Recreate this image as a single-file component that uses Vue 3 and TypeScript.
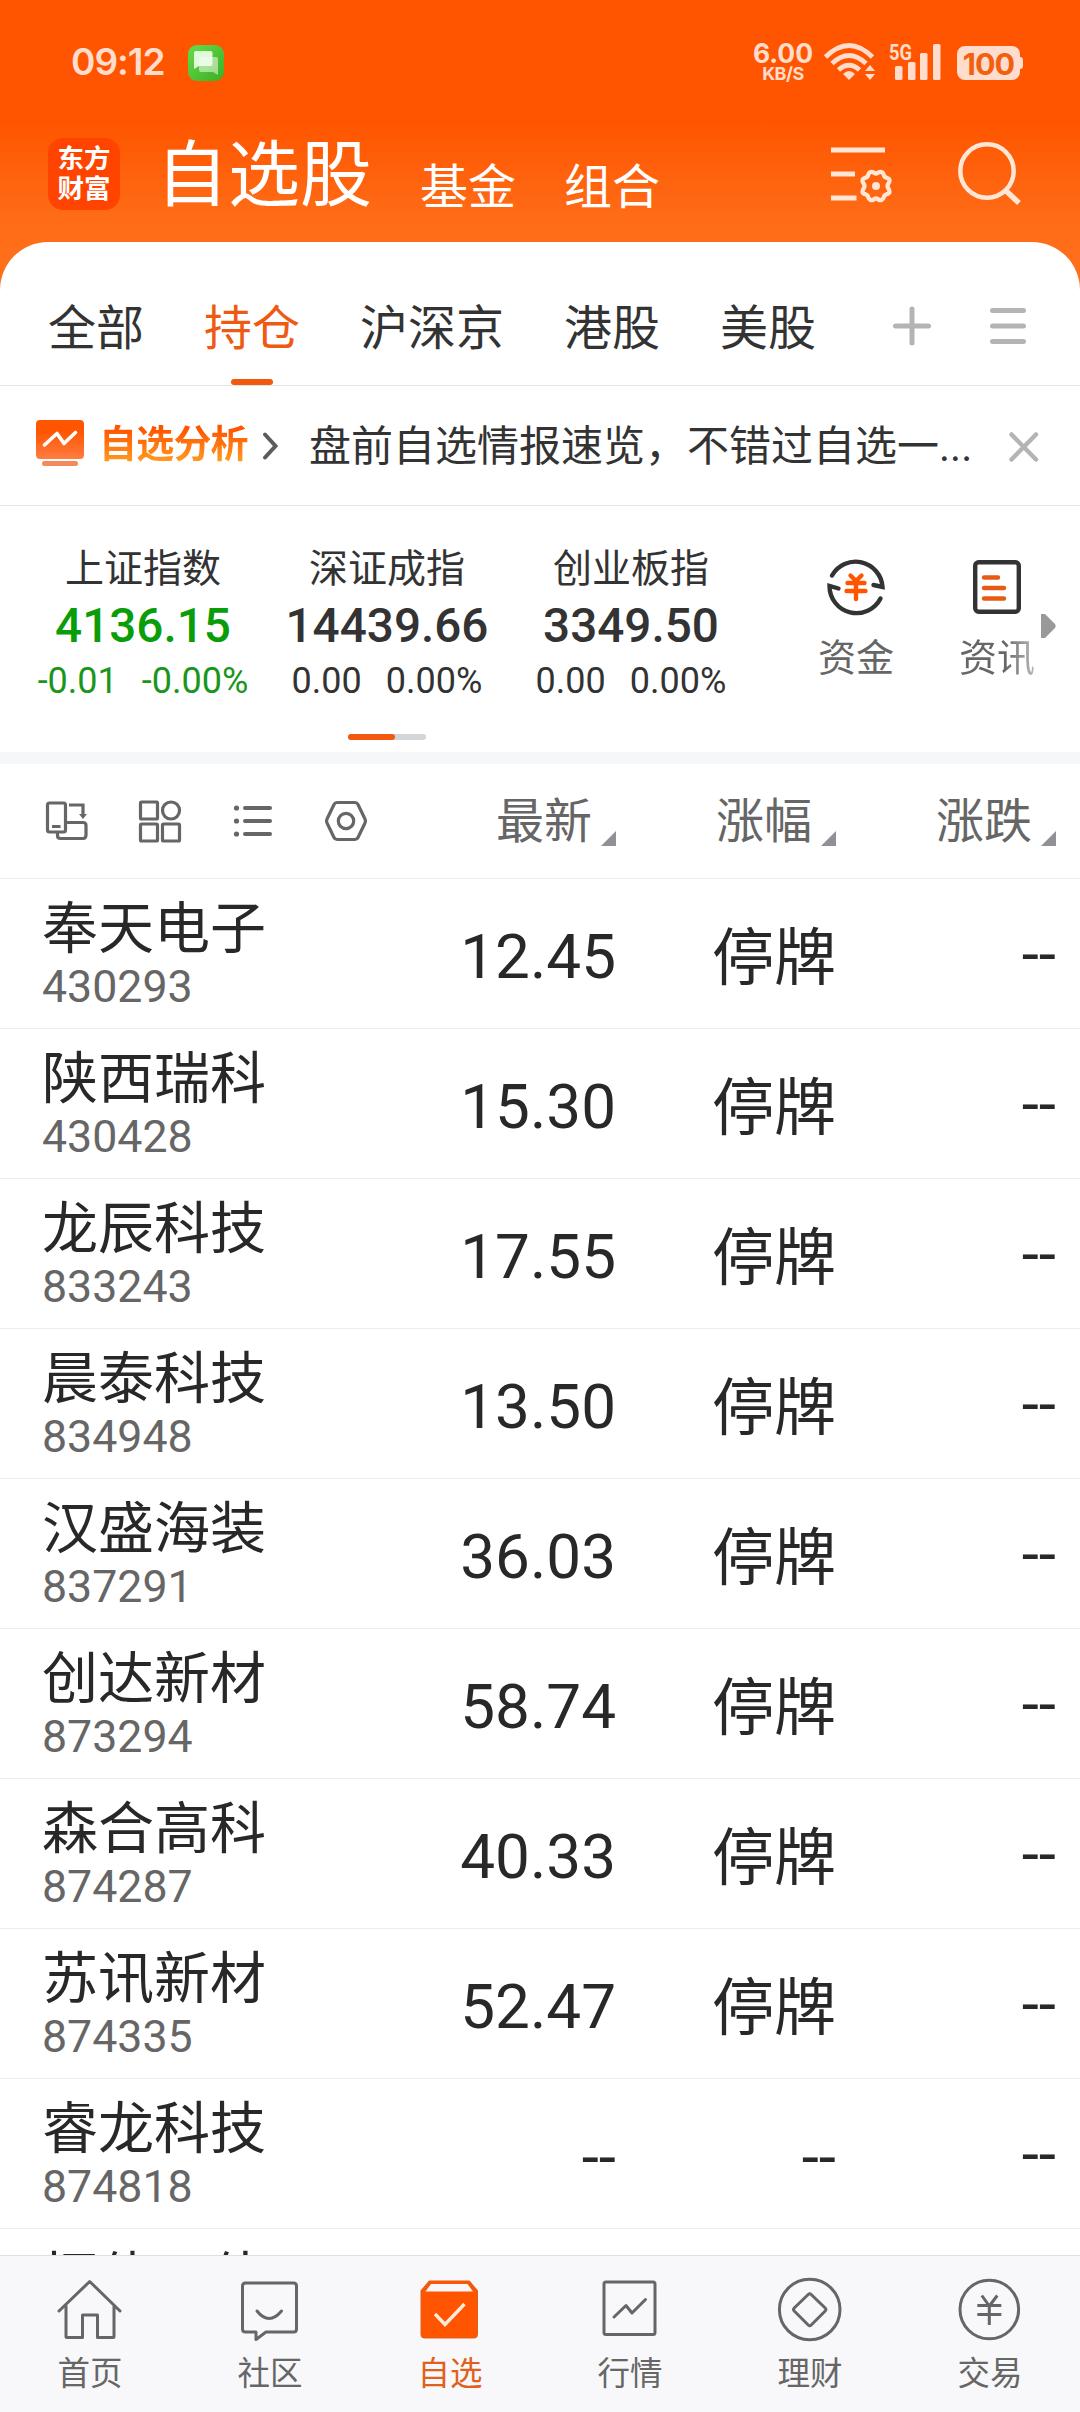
<script setup lang="ts">
interface IndexQuote {
  name: string
  value: string
  change: string
  percent: string
  down?: boolean
}

interface Stock {
  name: string
  code: string
  price: string
  rate: string
  diff: string
}

const tabs: string[] = ['全部', '持仓', '沪深京', '港股', '美股']
const activeTab = '持仓'

const indices: IndexQuote[] = [
  { name: '上证指数', value: '4136.15', change: '-0.01', percent: '-0.00%', down: true },
  { name: '深证成指', value: '14439.66', change: '0.00', percent: '0.00%' },
  { name: '创业板指', value: '3349.50', change: '0.00', percent: '0.00%' },
]

const columns: string[] = ['最新', '涨幅', '涨跌']

const stocks: Stock[] = [
  { name: '奉天电子', code: '430293', price: '12.45', rate: '停牌', diff: '--' },
  { name: '陕西瑞科', code: '430428', price: '15.30', rate: '停牌', diff: '--' },
  { name: '龙辰科技', code: '833243', price: '17.55', rate: '停牌', diff: '--' },
  { name: '晨泰科技', code: '834948', price: '13.50', rate: '停牌', diff: '--' },
  { name: '汉盛海装', code: '837291', price: '36.03', rate: '停牌', diff: '--' },
  { name: '创达新材', code: '873294', price: '58.74', rate: '停牌', diff: '--' },
  { name: '森合高科', code: '874287', price: '40.33', rate: '停牌', diff: '--' },
  { name: '苏讯新材', code: '874335', price: '52.47', rate: '停牌', diff: '--' },
  { name: '睿龙科技', code: '874818', price: '--', rate: '--', diff: '--' },
  { name: '恒伟一佳', code: '', price: '', rate: '', diff: '' },
]

const navItems: string[] = ['首页', '社区', '自选', '行情', '理财', '交易']
const activeNav = '自选'
</script>

<template>
  <div class="app">
    <header class="header">
      <div class="status">
        <span class="time">09:12</span>
        <svg class="msg" width="36" height="36" viewBox="0 0 36 36">
          <defs>
            <linearGradient id="msgBg" x1="0" y1="0" x2="1" y2="1">
              <stop offset="0" stop-color="#62dc4c" />
              <stop offset="1" stop-color="#3fae22" />
            </linearGradient>
          </defs>
          <rect width="36" height="36" rx="9" fill="url(#msgBg)" />
          <path d="M13 12h15q2 0 2 2v16l-5-3H13q-2 0-2-2V14q0-2 2-2z" fill="#fff" opacity=".5" />
          <path d="M8 6h14.500q2 0 2 2v11q0 2-2 2H11l-5 3V8q0-2 2-2z" fill="#f4fff0" opacity=".88" />
        </svg>
        <div class="speed"><b>6.00</b><i>KB/S</i></div>
        <svg class="wifi" width="52" height="38" viewBox="0 0 52 38" fill="none" stroke="#ffdccb">
          <path d="M1.500 14Q25 -9 48.500 14" stroke-width="4.800" />
          <path d="M8 20.500Q25 4.500 42 20.500" stroke-width="4.800" />
          <path d="M14.500 27Q25 17.500 35.500 27" stroke-width="4.800" />
          <path d="M19 31Q25 25 31 31L25 37z" fill="#ffdccb" stroke="none" />
          <path d="M41 28l5-6 5 6zM41 31l5 6 5-6z" fill="#ffdccb" stroke="none" />
        </svg>
        <svg class="signal" width="52" height="38" viewBox="0 0 52 38" fill="#ffdccb">
          <text x="0" y="17" font-size="22" font-weight="700" textLength="23" lengthAdjust="spacingAndGlyphs">5G</text>
          <rect x="6" y="23" width="7.500" height="14" rx="1.500" />
          <rect x="19" y="19" width="7.500" height="18" rx="1.500" />
          <rect x="31" y="10" width="7.500" height="27" rx="1.500" />
          <rect x="44" y="1" width="7.500" height="36" rx="1.500" />
        </svg>
        <div class="battery">100</div>
      </div>
      <div class="titlebar">
        <div class="logo"><span>东方</span><span>财富</span></div>
        <h1>自选股</h1>
        <span class="sub">基金</span>
        <span class="sub">组合</span>
        <svg class="filter" width="66" height="64" viewBox="0 0 66 64" fill="none" stroke="#ffe6d5" stroke-width="5">
          <path d="M1 10H55M1 34H25M1 58H26.500" />
          <path
            d="M46 33.500c2 0 3-2.500 5.500-1.500s2 3 3 4.500s4.500 1 5 3.500s-2 3.500-2 6s2.500 3.500 2 6s-4 2-5 3.500s-.5 3.500-3 4.500s-3.500-1.500-5.500-1.500s-3 2.500-5.500 1.500s-2-3-3-4.500s-4.500-1-5-3.500s2-3.500 2-6s-2.500-3.500-2-6s4-2 5-3.500s.5-3.500 3-4.500s3.500 1.500 5.500 1.500z"
            stroke-width="4.300"
            stroke-linejoin="round"
          />
          <circle cx="46" cy="46" r="4" fill="#ffe6d5" stroke="none" />
        </svg>
        <svg class="search" width="66" height="66" viewBox="0 0 66 66" fill="none" stroke="#ffe6d5" stroke-width="4.500">
          <circle cx="30" cy="31" r="26.700" />
          <path d="M48 50L62 63" stroke-width="5.500" />
        </svg>
      </div>
    </header>

    <main class="panel">
      <nav class="tabs">
        <span v-for="t in tabs" :key="t" class="tab" :class="{ active: t === activeTab }">{{ t }}</span>
        <svg class="plus" width="40" height="42" viewBox="0 0 40 42" stroke="#b4b4b4" stroke-width="5" stroke-linecap="round">
          <path d="M3.500 21H36.500M20 4V38" />
        </svg>
        <svg class="menu" width="36" height="42" viewBox="0 0 36 42" stroke="#b4b4b4" stroke-width="5" stroke-linecap="round">
          <path d="M2.500 5.500H33.500M2.500 21H33.500M2.500 36.500H33.500" />
        </svg>
      </nav>

      <section class="notice">
        <svg width="48" height="46" viewBox="0 0 48 46" fill="none">
          <defs>
            <linearGradient id="chartBg" x1="0" y1="0" x2="0" y2="1">
              <stop offset=".3" stop-color="#ff5500" />
              <stop offset="1" stop-color="#ff7d42" />
            </linearGradient>
          </defs>
          <rect width="48" height="39" rx="4" fill="url(#chartBg)" />
          <rect x="6" y="41" width="36" height="5" rx="2.500" fill="#f5895c" />
          <path d="M8.500 25L21 13.500 28 23.500 39.500 12.500" stroke="#fff" stroke-width="3.600" stroke-linecap="round" stroke-linejoin="round" />
        </svg>
        <b class="notice-tag">自选分析</b>
        <svg class="chev" width="17" height="28" viewBox="0 0 17 28" fill="none" stroke="#5c5c5c" stroke-width="4" stroke-linecap="round">
          <path d="M3 2.500L13.500 14 3 25.500" />
        </svg>
        <span class="notice-text">盘前自选情报速览，不错过自选一...</span>
        <svg class="close" width="32" height="32" viewBox="0 0 32 32" stroke="#b4b4b4" stroke-width="4.500" stroke-linecap="round">
          <path d="M3.500 3.500L28 28.500M28 3.500L3.500 28.500" />
        </svg>
      </section>

      <section class="market">
        <div class="indices">
          <div v-for="q in indices" :key="q.name" class="index" :class="{ down: q.down }">
            <span class="index-name">{{ q.name }}</span>
            <span class="index-value">{{ q.value }}</span>
            <span class="index-change"><i>{{ q.change }}</i><i>{{ q.percent }}</i></span>
          </div>
          <div class="pager"><i></i></div>
        </div>
        <div class="shortcut">
          <svg width="62" height="62" viewBox="0 0 62 62" fill="none" stroke="#333" stroke-width="4.400" stroke-linecap="round">
            <path d="M7 19.500A27 27 0 0 1 57.500 31L48.500 29" />
            <path d="M55.500 42.500A27 27 0 0 1 4.500 30L13.500 32.500" />
            <path d="M25.500 19.500L31 25 36.500 19.500M31 25V43M22.500 27H39.500M21.500 35H40.500" stroke="#ff5500" />
          </svg>
          <span>资金</span>
        </div>
        <div class="shortcut second">
          <svg width="62" height="62" viewBox="0 0 62 62" fill="none" stroke-width="4.400" stroke-linecap="round">
            <rect x="9.200" y="6.200" width="43.600" height="49.600" rx="3.500" stroke="#333" />
            <path d="M18 21.500H32M18 32H38M18 42.500H38" stroke="#e85a14" />
          </svg>
          <span class="faded">资讯</span>
        </div>
        <svg class="more" width="16" height="24" viewBox="0 0 16 24">
          <path d="M0 0H4L14 10Q15.500 12 14 14L4 24H0z" fill="#999" />
        </svg>
      </section>

      <section class="thead">
        <div class="tools">
          <svg viewBox="0 0 42 42">
            <rect x="1.500" y="3" width="18" height="29" rx="2" />
            <path d="M19.500 22.500H37q3 0 3 3V35q0 3.500-3 3.500H14.500q-3 0-3-3V32M6 26.500H14.500M23 5H37V15" />
            <path d="M33 14H41L37 19z" fill="#666" stroke="none" />
          </svg>
          <svg viewBox="0 0 42 42">
            <rect x="1.500" y="2" width="17" height="17" rx="1" />
            <rect x="1.500" y="24" width="17" height="17" rx="1" />
            <rect x="23.500" y="24" width="17" height="17" rx="1" />
            <circle cx="32" cy="10.500" r="8.500" />
          </svg>
          <svg viewBox="0 0 42 42">
            <g fill="#666" stroke="none">
              <circle cx="4.500" cy="8" r="2.600" />
              <circle cx="4.500" cy="21" r="2.600" />
              <circle cx="4.500" cy="34" r="2.600" />
            </g>
            <path d="M13 8H38M13 21H38M13 34H38" stroke-width="4" stroke-linecap="round" />
          </svg>
          <svg viewBox="0 0 42 42">
            <path d="M12 2.500H30q2 0 3 2L40 19q1 2 0 4L33 37.500q-1 2-3 2H12q-2 0-3-2L2 23q-1-2 0-4L9 4.500q1-2 3-2z" />
            <circle cx="21" cy="21" r="7.700" />
          </svg>
        </div>
        <div v-for="c in columns" :key="c" class="col">
          <span>{{ c }}</span>
          <svg width="15" height="15" viewBox="0 0 15 15"><path d="M15 0V15H0z" fill="#909096" /></svg>
        </div>
      </section>

      <ul class="list">
        <li v-for="s in stocks" :key="s.name" class="row">
          <div class="who">
            <span class="name">{{ s.name }}</span>
            <span class="code">{{ s.code }}</span>
          </div>
          <span class="cell" :class="{ low: s.price === '--' }">{{ s.price }}</span>
          <span class="cell" :class="s.rate === '--' ? 'low' : 'halt'">{{ s.rate }}</span>
          <span class="cell dash">{{ s.diff }}</span>
        </li>
      </ul>
    </main>

    <nav class="bottom">
      <div v-for="n in navItems" :key="n" class="nav" :class="{ on: n === activeNav }">
        <svg width="66" height="66" viewBox="0 0 66 66" fill="none" stroke="#666" stroke-width="3" stroke-linejoin="round" stroke-linecap="round">
          <path v-if="n === '首页'" d="M2 33L32.700 3.500 63 33M9 28V58.500q0 1 1 1H25.500V37H40.500V59.500H56q1 0 1-1V28" />
          <g v-else-if="n === '社区'" transform="translate(-1 0)">
            <path d="M8.500 5H57.500q3 0 3 3V51q0 3-3 3H30L20 61.500V54H9.500q-3 0-3-3V8q0-3 3-3z" />
            <path d="M21 33Q33 48 45.500 33" />
          </g>
          <g v-else-if="n === '自选'" transform="translate(-1 0)">
            <path d="M13.500 3.500H53L61 13V56q0 3.500-3.500 3.500H9q-3.500 0-3.500-3.500V13z" fill="#ff5500" stroke="#f05a10" stroke-width="2" />
            <path d="M15 6H51.500L57 13.500H9.500z" fill="#f8f8fa" stroke="none" />
            <path d="M19 36L29 46.500 48.500 26" stroke="#ffeadb" stroke-width="3.400" stroke-linecap="butt" stroke-linejoin="miter" />
          </g>
          <template v-else-if="n === '行情'">
            <rect x="7" y="4" width="51" height="52.500" rx="2" />
            <path d="M17 39L29 27.500 35 35 48.500 21.500" />
          </template>
          <template v-else-if="n === '理财'">
            <circle cx="32.700" cy="31.500" r="30.300" />
            <path d="M31.200 16.500Q32.700 15 34.200 16.500L48.200 30q1.500 1.500 0 3L34.200 47Q32.700 48.500 31.200 47L17.200 33q-1.500-1.500 0-3z" />
          </template>
          <g v-else transform="translate(-.7 0)">
            <circle cx="33" cy="31.500" r="29.300" />
            <path d="M25.500 17.500L33 28 41 17.500M33 28V47M21 27.500H45M21 36.500H45" stroke-linecap="butt" />
          </g>
        </svg>
        <span>{{ n }}</span>
      </div>
    </nav>
  </div>
</template>

<style>
body {
  margin: 0;
}
</style>

<style scoped>
.app {
  width: 1080px;
  height: 2412px;
  overflow: hidden;
  display: flex;
  flex-direction: column;
  background: #fff;
  color: #333;
  font-family: Roboto, 'Noto Sans CJK SC', sans-serif;
  font-weight: 400;
  white-space: nowrap;
}
svg {
  display: block;
  flex: none;
  overflow: visible;
}
i {
  font-style: normal;
}
.header {
  flex: none;
  height: 292px;
  margin-bottom: -50px;
  background: linear-gradient(#ff5500 0, #ff5500 122px, #ff6c17 220px, #ff701c 292px);
  color: #fff;
}
.status {
  height: 124px;
  display: flex;
  align-items: center;
  color: #ffdccb;
  padding-left: 71px;
  box-sizing: border-box;
}
.time {
  width: 117px;
  font: 600 37px/50px Inter, sans-serif;
  letter-spacing: -1px;
}
.msg {
  margin-top: 2px;
}
.speed {
  width: 62px;
  margin-left: 528px;
  display: flex;
  flex-direction: column;
  align-items: center;
  font-family: Inter, sans-serif;
}
.speed b {
  font-size: 26.500px;
  font-weight: 700;
  line-height: 23px;
}
.speed i {
  font-size: 18px;
  font-weight: 700;
  line-height: 17px;
  letter-spacing: -0.500px;
}
.wifi {
  margin-left: 10px;
}
.signal {
  margin-left: 13px;
}
.battery {
  position: relative;
  width: 63px;
  height: 34px;
  margin: 2px 0 0 16px;
  border-radius: 8px;
  background: #ffdccb;
  color: #f2600f;
  font: 700 30.500px/35px Inter, sans-serif;
  letter-spacing: -1px;
  text-align: center;
}
.battery::after {
  content: '';
  position: absolute;
  right: -3px;
  top: 11px;
  width: 3px;
  height: 12px;
  border-radius: 0 3px 3px 0;
  background: #ffdccb;
}
.titlebar {
  height: 118px;
  display: flex;
  align-items: flex-start;
  padding: 0 0 0 48px;
}
.logo {
  width: 72px;
  height: 72px;
  margin-top: 14px;
  border-radius: 15px;
  background: #ff4400;
  display: flex;
  flex-direction: column;
  align-items: center;
  justify-content: center;
  font-size: 26.500px;
  font-weight: 700;
  line-height: 30px;
}
h1 {
  flex: none;
  margin: 2px 0 0 36px;
  font-size: 72px;
  font-weight: 400;
  line-height: 100px;
}
.sub {
  flex: none;
  margin: 29px 0 0 48px;
  font-size: 48px;
  line-height: 70px;
}
.filter {
  margin: 16px 0 0 170px;
}
.search {
  margin: 16px 0 0 61px;
}
.panel {
  flex: 1;
  min-height: 0;
  overflow: hidden;
  border-radius: 48px 48px 0 0;
  background: #fff;
}
.tabs {
  height: 143px;
  display: flex;
  padding-left: 48px;
  border-bottom: 1px solid #e4e4e4;
}
.tab {
  position: relative;
  margin-right: 60px;
  font-size: 48px;
  line-height: 70px;
  padding-top: 52px;
}
.tab.active {
  color: #ee5a12;
}
.tab.active::after {
  content: '';
  position: absolute;
  left: 50%;
  bottom: 0;
  width: 42px;
  height: 6px;
  margin-left: -21px;
  border-radius: 3px;
  background: #f2590f;
}
.plus {
  margin: 63px 0 0 16px;
}
.menu {
  margin: 63px 0 0 58px;
}
.notice {
  height: 119px;
  display: flex;
  align-items: center;
  padding-left: 36px;
  border-bottom: 1px solid #e4e4e4;
}
.notice > svg:first-child {
  margin-top: -6px;
}
.notice-tag {
  width: 163px;
  margin-left: 15px;
  font-size: 38px;
  letter-spacing: -0.800px;
  line-height: 50px;
  font-weight: 700;
  margin-top: -3px;
  background: linear-gradient(#ff5500 20%, #ff9a20 85%);
  background-clip: text;
  -webkit-background-clip: text;
  color: transparent;
}
.notice-text {
  margin: 3px 0 0 30px;
  width: 699px;
  font-size: 42px;
  line-height: 60px;
}
.close {
  margin-top: 2px;
}
.market {
  height: 246px;
  display: flex;
  border-bottom: 12px solid #f5f7f9;
}
.indices {
  width: 732px;
  margin-left: 21px;
  display: flex;
  flex-wrap: wrap;
  align-content: flex-start;
}
.index {
  width: 244px;
  display: flex;
  flex-direction: column;
  align-items: center;
}
.index.down .index-value {
  color: #0a9d0a;
}
.index.down .index-change {
  color: #1a961a;
}
.index-name {
  margin-top: 36px;
  font-size: 39px;
  line-height: 54px;
}
.index-value {
  margin-top: 2px;
  font-size: 47.700px;
  line-height: 56px;
  font-weight: 500;
}
.index-change {
  margin-top: 7px;
  display: flex;
  gap: 24px;
  font-size: 36px;
  line-height: 40px;
}
.pager {
  width: 78px;
  height: 6px;
  margin: 33px auto 0;
  border-radius: 3px;
  background: #d2d6d9;
}
.pager i {
  display: block;
  width: 47px;
  height: 6px;
  border-radius: 3px;
  background: #f2590f;
}
.shortcut {
  width: 140px;
  margin-left: 33px;
  padding-top: 50px;
  display: flex;
  flex-direction: column;
  align-items: center;
  font-size: 38px;
  line-height: 54px;
  color: #666;
}
.shortcut span {
  margin-top: 13px;
}
.shortcut.second {
  margin-left: 1px;
}
.shortcut .faded {
  background: linear-gradient(90deg, #666 60%, #bbb);
  background-clip: text;
  -webkit-background-clip: text;
  color: transparent;
}
.more {
  margin: 108px 0 0 -26px;
}
.thead {
  height: 114px;
  display: flex;
  align-items: center;
  border-bottom: 1px solid #ececec;
  color: #666;
}
.tools {
  display: flex;
  width: 350px;
  gap: 51px;
  padding-left: 46px;
}
.tools svg {
  width: 42px;
  height: 42px;
  fill: none;
  stroke: #666;
  stroke-width: 3.200;
}
.col {
  width: 220px;
  display: flex;
  justify-content: flex-end;
  font-size: 48px;
  line-height: 70px;
}
.col span {
  padding-top: 2px;
}
.col svg {
  margin: 46px 0 0 9px;
}
.list {
  margin: 0;
  padding: 0;
  list-style: none;
}
.row {
  height: 149px;
  display: flex;
  border-bottom: 1px solid #ececec;
  color: #282828;
}
.who {
  width: 354px;
  padding-left: 42px;
  display: flex;
  flex-direction: column;
}
.name {
  margin-top: 10px;
  font-size: 56px;
  line-height: 80px;
}
.code {
  margin-top: -2px;
  font-size: 44.700px;
  line-height: 40px;
  color: #666;
}
.cell {
  width: 220px;
  text-align: right;
  font-size: 62px;
  line-height: 155px;
}
.cell.halt {
  line-height: 160px;
}
.cell.dash {
  line-height: 150px;
}
.cell.low {
  line-height: 156px;
}
.bottom {
  flex: none;
  height: 156px;
  display: flex;
  border-top: 1px solid #e0e0e0;
  background: #f8f8fa;
}
.nav {
  width: 180px;
  display: flex;
  flex-direction: column;
  align-items: center;
  padding-top: 22px;
  font-size: 32.500px;
  line-height: 46px;
  color: #666;
}
.nav span {
  margin-top: 7px;
}
.nav.on {
  color: #e0611c;
}
</style>
